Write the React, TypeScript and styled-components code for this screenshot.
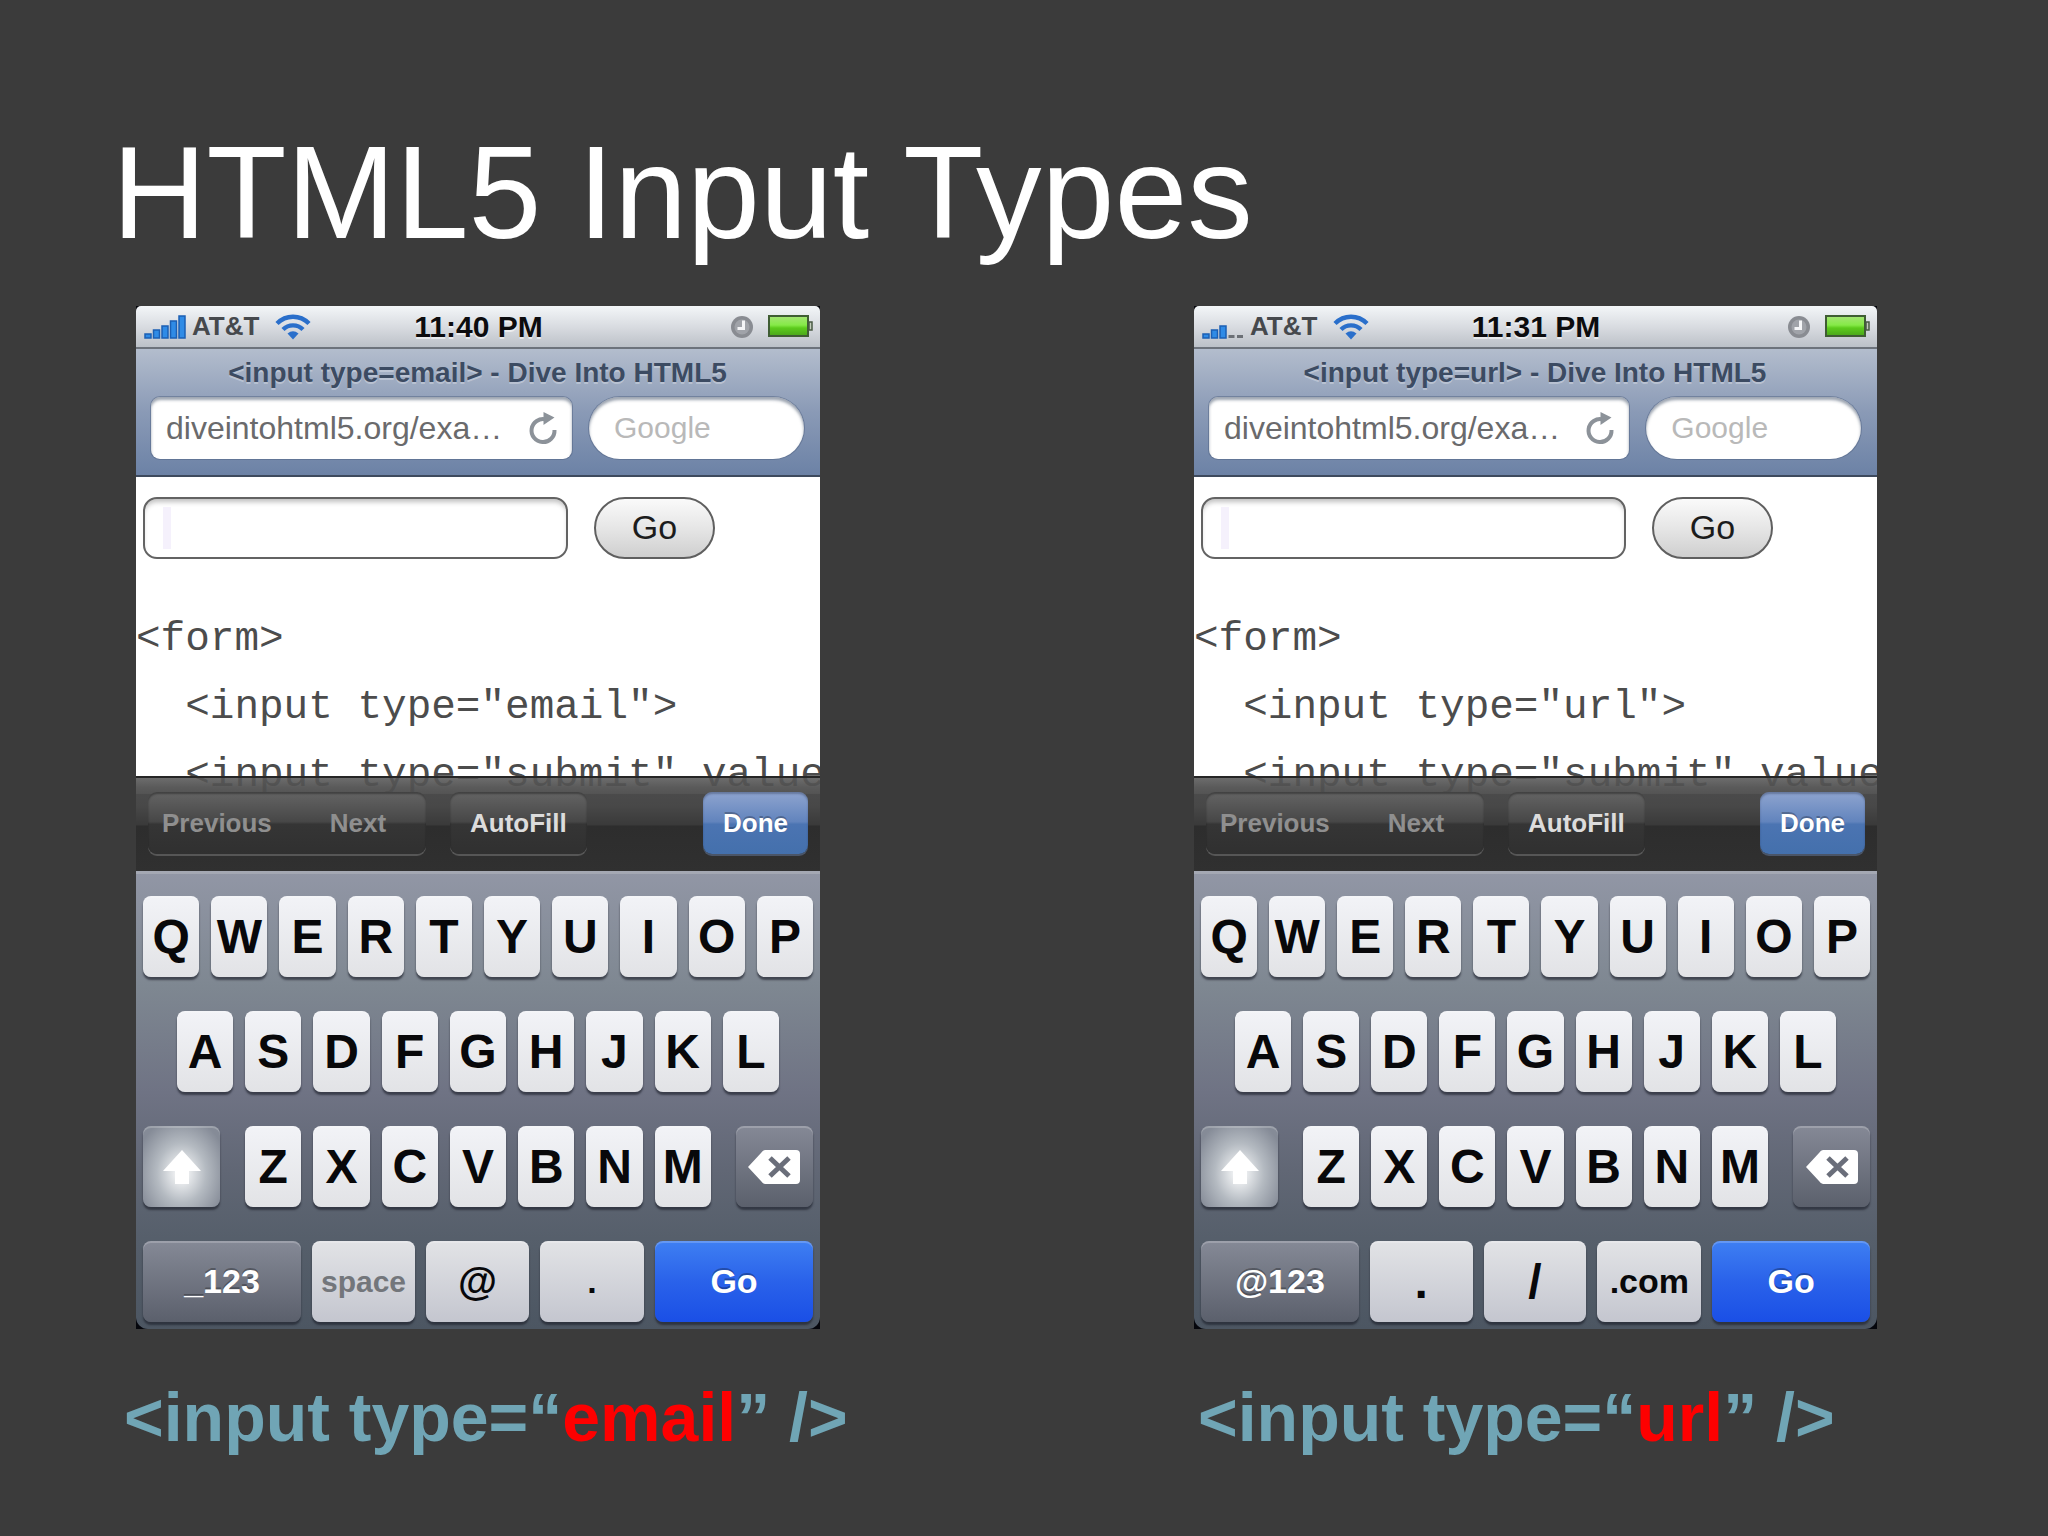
import React from "react";
import styled, { createGlobalStyle, css } from "styled-components";

const GlobalStyle = createGlobalStyle`
  *, *::before, *::after { box-sizing: border-box; }
  body {
    margin: 0;
    background: #3b3b3b;
    font-family: "Liberation Sans", Arial, Helvetica, sans-serif;
  }
  button, input { font: inherit; margin: 0; }
  button { cursor: pointer; }
`;

const Slide = styled.main`
  min-height: 100vh;
  padding: 118px 0 0;
  background: #3b3b3b;
`;

const Heading = styled.h1`
  margin: 0;
  padding-left: 112px;
  font-size: 131px;
  line-height: 150px;
  font-weight: 400;
  color: #fff;
`;

const Phones = styled.div`
  display: grid;
  grid-template-columns: 1058fr 683fr;
  align-items: start;
  padding: 38px 171px 0 136px;
`;

const Captions = styled.div`
  display: grid;
  grid-template-columns: 1074fr 681fr;
  padding: 48px 169px 0 124px;
`;

const Caption = styled.p`
  margin: 0;
  font-size: 68px;
  line-height: 80px;
  font-weight: 700;
  color: #70a5b5;
  white-space: nowrap;
`;

const Accent = styled.em`
  font-style: normal;
  color: #fe0000;
`;

const Phone = styled.section`
  display: flex;
  flex-direction: column;
  width: 100%;
  max-width: 684px;
  background: #05060c;
  overflow: hidden;
`;

const StatusBar = styled.header`
  display: grid;
  grid-template-columns: 1fr auto 1fr;
  align-items: center;
  height: 43px;
  padding: 0 7px 0 8px;
  border-bottom: 2px solid #6d737c;
  border-radius: 5px 5px 0 0;
  background: linear-gradient(#f3f6f8, #d9dce1 50%, #bcc1c8);
  color: #0c0c0e;
`;

const Carrier = styled.div`
  display: flex;
  align-items: center;
  gap: 6px;
  font-size: 26px;
  font-weight: 700;
  color: #46494d;
`;

const CarrierName = styled.span`
  padding-right: 10px;
`;

const Clock = styled.time`
  font-size: 30px;
  line-height: 38px;
  font-weight: 700;
  text-shadow: 0 2px 0 rgba(255, 255, 255, 0.6);
`;

const Indicators = styled.div`
  display: flex;
  align-items: center;
  justify-content: flex-end;
  gap: 14px;
`;

const NavBar = styled.div`
  height: 128px;
  padding: 8px 16px 0 15px;
  border-bottom: 2px solid #3e4a5e;
  background: linear-gradient(#b3bdcd, #8a9ab6 50%, #6c82a6);
`;

const PageTitle = styled.h2`
  margin: 0;
  font-size: 28px;
  line-height: 32px;
  font-weight: 700;
  text-align: center;
  white-space: nowrap;
  color: #3c4b62;
  text-shadow: 0 2px 0 rgba(255, 255, 255, 0.3);
`;

const Fields = styled.div`
  display: grid;
  grid-template-columns: minmax(0, 421fr) minmax(0, 215fr);
  gap: 17px;
  padding-top: 8px;
`;

const field = css`
  height: 62px;
  border: 0;
  background: #fff;
  box-shadow: inset 0 3px 3px rgba(60, 75, 100, 0.5), 0 0 0 1px rgba(80, 98, 130, 0.5);
`;

const Address = styled.div`
  ${field}
  display: flex;
  align-items: center;
  padding: 0 14px 0 15px;
  border-radius: 9px;
`;

const AddressInput = styled.input`
  flex: 1;
  min-width: 0;
  height: 44px;
  padding: 0;
  border: 0;
  outline: 0;
  background: none;
  font-size: 32px;
  color: #6a6a6c;
`;

const ReloadButton = styled.button`
  display: flex;
  padding: 0;
  border: 0;
  background: none;
`;

const SearchInput = styled.input`
  ${field}
  width: 100%;
  min-width: 0;
  padding: 0 25px;
  border-radius: 31px;
  outline: 0;
  font-size: 30px;
  &::placeholder { color: #b9b9b9; opacity: 1; }
`;

const Page = styled.div`
  height: 317px;
  padding: 20px 0 0;
  overflow: hidden;
  background: #fff;
`;

const PageForm = styled.form`
  display: flex;
  gap: 26px;
  padding-left: 7px;
`;

const TextInput = styled.input`
  width: 425px;
  height: 62px;
  padding: 0 18px;
  border: 2px solid #636363;
  border-radius: 14px;
  outline: 0;
  background: linear-gradient(#f5f1fc, #f5f1fc) 18px 8px / 8px 42px no-repeat #fff;
  box-shadow: inset 0 5px 5px -2px rgba(0, 0, 0, 0.25);
  font-size: 32px;
`;

const SubmitButton = styled.button`
  width: 121px;
  height: 62px;
  padding: 0 0 2px;
  border: 2px solid #5f5f5f;
  border-radius: 31px;
  background: linear-gradient(#fafafa, #e6e6e6 50%, #cfcfcf);
  font-size: 34px;
  color: #1c1c1c;
`;

const Code = styled.pre`
  margin: 0;
  padding-top: 46px;
  font-family: "Liberation Mono", "Courier New", monospace;
  font-size: 41px;
  line-height: 68px;
  color: #4c4c4c;
`;

const Assistant = styled.div`
  position: relative;
  display: flex;
  align-items: center;
  height: 95px;
  margin-top: -18px;
  padding: 0 12px 3px;
  border-top: 2px solid #262626;
  background: linear-gradient(rgba(88, 88, 88, 0.88), rgba(80, 80, 80, 0.94) 10%, #484848 30%, #3a3a3a 50%, #2d2d2d 52%, #303030);
`;

const raised = css`
  background: linear-gradient(#646464, #474747 48%, #353535 52%, #303030);
  box-shadow: inset 0 2px 2px rgba(0, 0, 0, 0.35), 0 2px 0 0 #565656;
`;

const Segments = styled.div`
  ${raised}
  display: flex;
  width: 278px;
  margin-right: 24px;
  border-radius: 9px;
`;

const BarButton = styled.button<{ $tone: "dim" | "plain" | "done" }>`
  height: 62px;
  padding: 0 14px;
  border: 0;
  border-radius: 9px;
  background: none;
  font-size: 26px;
  font-weight: 700;
  color: #8f8f8f;
  ${(p) =>
    p.$tone === "plain" &&
    css`
      ${raised}
      padding: 0 20px;
      color: #dcdcdc;
    `}
  ${(p) =>
    p.$tone === "done" &&
    css`
      margin-left: auto;
      padding: 0 20px;
      color: #fff;
      background: linear-gradient(#8ea4cf, #6284bd 48%, #4b74b2 52%, #4470ac);
      box-shadow: inset 0 2px 2px rgba(30, 40, 70, 0.35), 0 2px 0 0 #4a5568;
      text-shadow: 0 -2px 0 rgba(0, 0, 0, 0.25);
    `}
  ${Segments} & + & { padding: 0 44px; }
`;

const Keyboard = styled.div`
  display: flex;
  flex-direction: column;
  gap: 34px;
  padding: 22px 7px 7px;
  border-top: 3px solid #a4a8b3;
  border-radius: 0 0 12px 12px;
  background: linear-gradient(#9196a5, #7e8791 25%, #6f7384 48%, #616775 65%, #565f6b 80%, #4c5662);
`;

const KeyRow = styled.div<{ $inset?: boolean }>`
  display: flex;
  gap: 12px;
  padding: 0 ${(p) => (p.$inset ? 34 : 0)}px;
`;

const ShiftRow = styled.div`
  display: grid;
  grid-template-columns: 77fr 465fr 77fr;
  gap: 25px;
`;

const ActionRow = styled.div`
  display: grid;
  grid-template-columns: 158fr 103fr 103fr 104fr 158fr;
  gap: 11px;
`;

type Look = "light" | "dark" | "glow" | "blue";

const looks = {
  light: css`
    background: linear-gradient(#f2f3f7, #e2e3e6);
    color: #08080a;
  `,
  dark: css`
    background: linear-gradient(#858996, #5b606c);
    color: #fff;
    text-shadow: 0 -2px 0 rgba(0, 0, 0, 0.3);
  `,
  glow: css`
    background: radial-gradient(ellipse at 50% 58%, #eceef0 12%, #b4bac1 45%, #858b97 85%);
    color: #fff;
  `,
  blue: css`
    background: linear-gradient(#3e7ff2, #2a62ea 50%, #1a4fe6);
    color: #fff;
    text-shadow: 0 -2px 0 rgba(0, 0, 0, 0.3);
  `,
};

const Key = styled.button<{ $look?: Look; $size?: number; $muted?: boolean; $low?: boolean }>`
  display: flex;
  flex: 1;
  align-items: center;
  justify-content: center;
  min-width: 0;
  height: 81px;
  padding: 0;
  border: 0;
  border-radius: 8px;
  font-size: ${(p) => p.$size ?? 48}px;
  font-weight: 700;
  ${(p) => looks[p.$look ?? "light"]}
  ${(p) => p.$low && css`background: linear-gradient(#e2e3e6, #c4c6cf);`}
  ${(p) => p.$muted && css`color: #73767b;`}
  box-shadow: inset 0 2px 0 rgba(255, 255, 255, 0.2), 0 3px 2px rgba(30, 34, 44, 0.65);
`;

const barHeights = [4, 8, 12, 17, 22];

function Signal({ bars }: { bars: number }) {
  return (
    <svg width="42" height="24" viewBox="0 0 42 24" aria-label="Signal">
      {barHeights.map((full, i) => {
        const on = i < bars;
        const h = on ? full : 3;
        return (
          <rect
            key={i}
            x={i * 8.5 + 1}
            y={23 - h}
            width="6"
            height={h}
            fill={on ? "#2f8be6" : "#6c7076"}
            stroke={on ? "#1b5fb4" : "none"}
            strokeWidth="1.5"
          />
        );
      })}
    </svg>
  );
}

function Wifi() {
  return (
    <svg width="36" height="26" viewBox="0 0 36 26" aria-label="Wi-Fi">
      <g fill="none" stroke="#2a6fcb" strokeWidth="4.4">
        <path d="M2 9.5C11 0.500 25 0.500 34 9.500" />
        <path d="M8 15.500C13.500 10 22.500 10 28 15.500" />
      </g>
      <path d="M12.500 19.500Q18 15 23.500 19.500L18 25.500Z" fill="#2a6fcb" />
    </svg>
  );
}

function AlarmClock() {
  return (
    <svg width="24" height="24" viewBox="0 0 24 24" aria-label="Alarm">
      <circle cx="12" cy="12" r="11" fill="#898c92" />
      <circle cx="12" cy="12" r="7.500" fill="#a0a3a9" />
      <path d="M13.500 5.500V13.500H7.500" fill="none" stroke="#f4f5f7" strokeWidth="3" />
    </svg>
  );
}

function Battery() {
  return (
    <svg width="45" height="23" viewBox="0 0 45 23" aria-label="Battery">
      <defs>
        <linearGradient id="charge" x1="0" y1="0" x2="0" y2="1">
          <stop offset="0" stopColor="#a5e476" />
          <stop offset="0.45" stopColor="#86ea48" />
          <stop offset="0.6" stopColor="#5ccb1c" />
          <stop offset="1" stopColor="#4aa51a" />
        </linearGradient>
      </defs>
      <rect x="1" y="1" width="39" height="20" fill="url(#charge)" stroke="#3f5d33" strokeWidth="2" />
      <rect x="41" y="7" width="3" height="8" fill="#c3cdbd" stroke="#4a5a44" strokeWidth="1.5" />
    </svg>
  );
}

function Reload() {
  return (
    <svg width="30" height="34" viewBox="0 0 30 34" aria-hidden="true">
      <path d="M18 8.500A11.500 11.500 0 1 0 26.500 19" fill="none" stroke="#8c9299" strokeWidth="4" />
      <path d="M15.500 1L26.500 6.500L15.500 14Z" fill="#8c9299" />
    </svg>
  );
}

function ShiftArrow() {
  return (
    <svg width="40" height="36" viewBox="0 0 40 36" aria-hidden="true">
      <path d="M20 1L39 22H27V35H13V22H1Z" fill="#fff" />
    </svg>
  );
}

function Backspace() {
  return (
    <svg width="52" height="34" viewBox="0 0 52 34" aria-hidden="true">
      <path d="M17 0H48Q52 0 52 4V30Q52 34 48 34H17Q15 34 13 31L0 17L13 3Q15 0 17 0Z" fill="#fff" />
      <path d="M22 8L41 26M41 8L22 26" stroke="#6a6e7a" strokeWidth="5" />
    </svg>
  );
}

interface ActionKey {
  label: string;
  size: number;
  look?: Look;
  muted?: boolean;
}

interface Screen {
  type: string;
  time: string;
  bars: number;
  actions: ActionKey[];
}

const screens: Screen[] = [
  {
    type: "email",
    time: "11:40 PM",
    bars: 5,
    actions: [
      { label: "_123", size: 34, look: "dark" },
      { label: "space", size: 30, muted: true },
      { label: "@", size: 40 },
      { label: ".", size: 34 },
      { label: "Go", size: 34, look: "blue" },
    ],
  },
  {
    type: "url",
    time: "11:31 PM",
    bars: 3,
    actions: [
      { label: "@123", size: 34, look: "dark" },
      { label: ".", size: 48 },
      { label: "/", size: 48 },
      { label: ".com", size: 34 },
      { label: "Go", size: 34, look: "blue" },
    ],
  },
];

function PhoneScreen({ screen }: { screen: Screen }) {
  const { type, time, bars, actions } = screen;
  return (
    <Phone aria-label={`${type} keyboard`}>
      <StatusBar>
        <Carrier>
          <Signal bars={bars} />
          <CarrierName>AT&amp;T</CarrierName>
          <Wifi />
        </Carrier>
        <Clock>{time}</Clock>
        <Indicators>
          <AlarmClock />
          <Battery />
        </Indicators>
      </StatusBar>
      <NavBar>
        <PageTitle>{`<input type=${type}> - Dive Into HTML5`}</PageTitle>
        <Fields>
          <Address>
            <AddressInput aria-label="Address" defaultValue="diveintohtml5.org/exa…" />
            <ReloadButton type="button" aria-label="Reload">
              <Reload />
            </ReloadButton>
          </Address>
          <SearchInput aria-label="Search" placeholder="Google" />
        </Fields>
      </NavBar>
      <Page>
        <PageForm onSubmit={(e) => e.preventDefault()}>
          <TextInput type={type} aria-label={type} />
          <SubmitButton type="submit">Go</SubmitButton>
        </PageForm>
        <Code>{`<form>\n  <input type="${type}">\n  <input type="submit" value`}</Code>
      </Page>
      <Assistant>
        <Segments>
          <BarButton type="button" $tone="dim">Previous</BarButton>
          <BarButton type="button" $tone="dim">Next</BarButton>
        </Segments>
        <BarButton type="button" $tone="plain">AutoFill</BarButton>
        <BarButton type="button" $tone="done">Done</BarButton>
      </Assistant>
      <Keyboard>
        <KeyRow>
          {[..."QWERTYUIOP"].map((k) => <Key key={k} type="button">{k}</Key>)}
        </KeyRow>
        <KeyRow $inset>
          {[..."ASDFGHJKL"].map((k) => <Key key={k} type="button">{k}</Key>)}
        </KeyRow>
        <ShiftRow>
          <Key type="button" $look="glow" aria-label="Shift"><ShiftArrow /></Key>
          <KeyRow>
            {[..."ZXCVBNM"].map((k) => <Key key={k} type="button">{k}</Key>)}
          </KeyRow>
          <Key type="button" $look="dark" aria-label="Delete"><Backspace /></Key>
        </ShiftRow>
        <ActionRow>
          {actions.map((a) => (
            <Key key={a.label} type="button" $look={a.look} $size={a.size} $muted={a.muted} $low={!a.look}>
              {a.label}
            </Key>
          ))}
        </ActionRow>
      </Keyboard>
    </Phone>
  );
}

export default function App() {
  return (
    <>
      <GlobalStyle />
      <Slide>
        <Heading>HTML5 Input Types</Heading>
        <Phones>
          {screens.map((s) => <PhoneScreen key={s.type} screen={s} />)}
        </Phones>
        <Captions>
          {screens.map((s) => (
            <Caption key={s.type}>
              {"<input type=“"}<Accent>{s.type}</Accent>{"” />"}
            </Caption>
          ))}
        </Captions>
      </Slide>
    </>
  );
}
